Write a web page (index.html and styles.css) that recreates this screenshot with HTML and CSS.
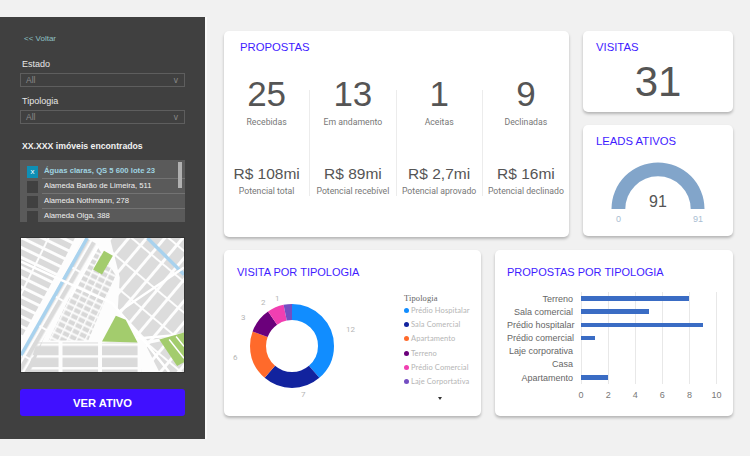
FILE: index.html
```html
<!DOCTYPE html>
<html lang="pt-BR">
  <head>
    <meta charset="UTF-8" />
    <title>Dashboard de propostas</title>
    <link rel="stylesheet" href="styles.css">
  </head>
  <body>
    <div class="page">
      <aside class="side">
        <a class="back">&lt;&lt; Voltar</a>
        <label class="field-label">Estado</label>
        <div class="select"><span>All</span><span>v</span></div>
        <label class="field-label second">Tipologia</label>
        <div class="select"><span>All</span><span>v</span></div>
        <h3 class="found">XX.XXX imóveis encontrados</h3>
        <div class="list">
          <div class="row active"><i class="check">x</i><span>Águas claras, QS 5 600 lote 23</span></div>
          <div class="row"><i class="check"></i><span>Alameda Barão de Limeira, 511</span></div>
          <div class="row"><i class="check"></i><span>Alameda Nothmann, 278</span></div>
          <div class="row"><i class="check"></i><span>Alameda Olga, 388</span></div>
          <div class="scroll"></div>
        </div>
        <svg class="map" viewBox="0 0 165 136" preserveAspectRatio="none">
          <defs>
            <pattern id="long" width="25" height="9" patternUnits="userSpaceOnUse" patternTransform="rotate(26)">
              <rect x="1" y="1" width="23" height="6" fill="#dadada" />
            </pattern>
            <pattern id="strip" width="34" height="7" patternUnits="userSpaceOnUse" patternTransform="rotate(-60)">
              <rect x="1" y="1" width="32" height="4.5" fill="#dadada" />
            </pattern>
            <pattern id="right" width="24" height="14" patternUnits="userSpaceOnUse" patternTransform="rotate(-50)">
              <rect x="1" y="1" width="22" height="11" fill="#dcdcdc" />
            </pattern>
            <pattern id="small" width="8" height="6.5" patternUnits="userSpaceOnUse" patternTransform="rotate(26)">
              <rect x="0.5" y="0.5" width="6.5" height="4.5" fill="#d8d8d8" />
            </pattern>
            <pattern id="flat" width="40" height="12" patternUnits="userSpaceOnUse">
              <rect x="2" y="1.5" width="36" height="9.5" fill="#dadada" />
            </pattern>
          </defs>
          <rect width="165" height="136" fill="#fdfdfd" />
          <polygon points="0,0 56,0 0,102" fill="url(#long)" />
          <polygon points="62,2 70,0 78,6 64,30 36,76 22,104 10,136 0,136 0,122" fill="url(#strip)" />
          <polygon points="78,10 96,38 84,66 68,104 28,104 52,54" fill="url(#small)" />
          <polygon points="90,0 165,0 165,98 128,104 98,72 100,40" fill="url(#right)" />
          <polygon points="16,106 118,106 122,136 6,136" fill="url(#flat)" />
          <polygon points="126,108 165,100 165,136 140,136" fill="url(#right)" />
          <path d="M0 119 L67 0" stroke="#a8d2ee" stroke-width="3.5" fill="none" />
          <path d="M128 0 L165 37" stroke="#a8d2ee" stroke-width="3.5" fill="none" />
          <path d="M0 24 L92 66 L126 106 L150 136" stroke="#fff" stroke-width="2.5" fill="none" />
          <path d="M82 105 L165 98 M165 30 L100 74 M78 8 L50 60" stroke="#fff" stroke-width="2.5" fill="none" />
          <polygon points="84,13 93,18 82,37 73,32" fill="#a3cc6d" />
          <polygon points="96,79 106,83 118,106 82,105" fill="#a3cc6d" />
          <polygon points="140,103 165,96 165,126 158,130" fill="#a3cc6d" />
          <path d="M150 103 L165 122 M157 100 L165 110" stroke="#fff" stroke-width="1.5" fill="none" />
        </svg>
        <button class="cta">VER ATIVO</button>
      </aside>

      <main class="main">
        <div class="top">
          <section class="card propostas">
            <h2 class="title">PROPOSTAS</h2>
            <div class="stats">
              <div class="stat">
                <div class="big">25</div><div class="lbl">Recebidas</div>
                <div class="mid">R$ 108mi</div><div class="lbl">Potencial total</div>
              </div>
              <div class="stat">
                <div class="big">13</div><div class="lbl">Em andamento</div>
                <div class="mid">R$ 89mi</div><div class="lbl">Potencial recebível</div>
              </div>
              <div class="stat">
                <div class="big">1</div><div class="lbl">Aceitas</div>
                <div class="mid">R$ 2,7mi</div><div class="lbl">Potencial aprovado</div>
              </div>
              <div class="stat">
                <div class="big">9</div><div class="lbl">Declinadas</div>
                <div class="mid">R$ 16mi</div><div class="lbl">Potencial declinado</div>
              </div>
            </div>
          </section>
          <div class="stack">
            <section class="card visitas">
              <h2 class="title">VISITAS</h2>
              <div class="visitas-num">31</div>
            </section>
            <section class="card leads">
              <h2 class="title">LEADS ATIVOS</h2>
              <div class="gauge">
                <svg width="94" height="47" viewBox="0 0 94 47">
                  <path d="M0.5 47 A46.5 46.5 0 0 1 93.5 47 L79.7 47 A32.7 32.7 0 0 0 14.3 47 Z" fill="#82a5ca" />
                </svg>
                <span class="gauge-val">91</span>
              </div>
              <div class="gauge-ends"><span>0</span><span>91</span></div>
            </section>
          </div>
        </div>

        <div class="bottom">
          <section class="card tipo">
            <h2 class="title large">VISITA POR TIPOLOGIA</h2>
            <div class="tipo-body">
              <div class="donut">
                <svg width="84" height="84" viewBox="0 0 84 84">
                  <g fill="none" stroke-width="16" transform="rotate(-90 42 42)">
                    <circle cx="42" cy="42" r="34" pathLength="31" stroke="#118dff" stroke-dasharray="12 19" stroke-dashoffset="0" />
                    <circle cx="42" cy="42" r="34" pathLength="31" stroke="#12239e" stroke-dasharray="7 24" stroke-dashoffset="-12" />
                    <circle cx="42" cy="42" r="34" pathLength="31" stroke="#ff6a2b" stroke-dasharray="6 25" stroke-dashoffset="-19" />
                    <circle cx="42" cy="42" r="34" pathLength="31" stroke="#6b007b" stroke-dasharray="3 28" stroke-dashoffset="-25" />
                    <circle cx="42" cy="42" r="34" pathLength="31" stroke="#f13fb1" stroke-dasharray="2 29" stroke-dashoffset="-28" />
                    <circle cx="42" cy="42" r="34" pathLength="31" stroke="#744ec2" stroke-dasharray="1 30" stroke-dashoffset="-30" />
                  </g>
                </svg>
                <span class="slice s12">12</span>
                <span class="slice s7">7</span>
                <span class="slice s6">6</span>
                <span class="slice s3">3</span>
                <span class="slice s2">2</span>
                <span class="slice s1">1</span>
              </div>
              <div class="legend">
                <div class="legend-title">Tipologia</div>
                <div class="legend-item"><i class="dot c1"></i>Prédio Hospitalar</div>
                <div class="legend-item"><i class="dot c2"></i>Sala Comercial</div>
                <div class="legend-item"><i class="dot c3"></i>Apartamento</div>
                <div class="legend-item"><i class="dot c4"></i>Terreno</div>
                <div class="legend-item"><i class="dot c5"></i>Prédio Comercial</div>
                <div class="legend-item"><i class="dot c6"></i>Laje Corportativa</div>
                <div class="legend-more"></div>
              </div>
            </div>
          </section>
          <section class="card barras">
            <h2 class="title large">PROPOSTAS POR TIPOLOGIA</h2>
            <div class="chart">
              <div class="bar-row"><span class="bar-name">Terreno</span><div class="track"><div class="bar" style="width:80%"></div></div></div>
              <div class="bar-row"><span class="bar-name">Sala comercial</span><div class="track"><div class="bar" style="width:50%"></div></div></div>
              <div class="bar-row"><span class="bar-name">Prédio hospitalar</span><div class="track"><div class="bar" style="width:90%"></div></div></div>
              <div class="bar-row"><span class="bar-name">Prédio comercial</span><div class="track"><div class="bar" style="width:10%"></div></div></div>
              <div class="bar-row"><span class="bar-name">Laje corporativa</span><div class="track"></div></div>
              <div class="bar-row"><span class="bar-name">Casa</span><div class="track"></div></div>
              <div class="bar-row"><span class="bar-name">Apartamento</span><div class="track"><div class="bar" style="width:20%"></div></div></div>
              <div class="axis"><span>0</span><span>2</span><span>4</span><span>6</span><span>8</span><span>10</span></div>
            </div>
          </section>
        </div>
      </main>
    </div>
  </body>
</html>
```

FILE: styles.css
```css
* {
  margin: 0;
  padding: 0;
  box-sizing: border-box;
}
body {
  background-color: #f1f1f1;
  font-family: "Liberation Sans", Arial, sans-serif;
  color: #555;
}
.page {
  display: flex;
  align-items: flex-start;
  padding-top: 17px;
}

/* lateral */
.side {
  width: 205px;
  height: 422px;
  flex-shrink: 0;
  background-color: #404040;
  box-shadow: 2px 0 0 #fafafa;
  padding: 17px 20px 0;
  display: flex;
  flex-direction: column;
}
.back {
  font-size: 8px;
  line-height: 10px;
  color: #8fc1c4;
  margin-left: 4px;
}
.field-label {
  font-size: 9px;
  line-height: 12px;
  color: #e6e6e6;
  margin: 14px 0 0 2px;
}
.field-label.second {
  margin-top: 8px;
}
.select {
  height: 14px;
  margin-top: 3px;
  border: 1px solid #5e5e5e;
  padding: 0 6px 0 5px;
  display: flex;
  justify-content: space-between;
  align-items: center;
  font-size: 8.5px;
  color: #8a8a8a;
}
.found {
  font-size: 8.7px;
  line-height: 12px;
  font-weight: bold;
  color: #f2f2f2;
  margin: 16px 0 0 2px;
}
.list {
  height: 62px;
  margin-top: 8px;
  padding-top: 4px;
  background-color: #5a5a5a;
  overflow: hidden;
  position: relative;
}
.row {
  height: 15px;
  display: flex;
  align-items: center;
  gap: 4px;
  padding-left: 7px;
  font-size: 7.7px;
  color: #f0f0f0;
}
.row span {
  flex: 1;
  height: 15px;
  line-height: 14px;
  padding-left: 2px;
  border-bottom: 1px solid #737373;
}
.check {
  width: 11px;
  height: 12px;
  flex-shrink: 0;
  background-color: #404040;
  font-style: normal;
  font-size: 8px;
  line-height: 11px;
  text-align: center;
  color: #fff;
}
.row.active span {
  color: #9fd3e0;
  font-weight: bold;
}
.row.active .check {
  background-color: #0e8fb5;
}
.scroll {
  position: absolute;
  top: 2px;
  right: 3px;
  width: 4px;
  height: 26px;
  background-color: #b0b0b0;
}
.map {
  display: block;
  width: 165px;
  height: 136px;
  margin-top: 15px;
  border: 1px solid #333;
}
.cta {
  height: 27px;
  margin-top: 16px;
  border: 0;
  border-radius: 3px;
  background-color: #4010ff;
  color: #fff;
  font-family: "Liberation Sans", Arial, sans-serif;
  font-size: 11.2px;
  font-weight: bold;
}

/* conteudo */
.main {
  width: 509px;
  margin-left: 19px;
  padding-top: 14px;
  display: flex;
  flex-direction: column;
  gap: 13px;
}
.top,
.bottom {
  display: flex;
  gap: 14px;
}
.card {
  background-color: #fff;
  border-radius: 5px;
  box-shadow: 0 2px 3px rgba(0, 0, 0, 0.25);
}
.title {
  font-size: 11.3px;
  line-height: 14px;
  font-weight: normal;
  color: #3f1cff;
}
.title.large {
  font-size: 11px;
}

.propostas {
  width: 345px;
  height: 206px;
  padding: 9px 0 0 16px;
}
.stats {
  display: flex;
  margin: 36px 0 0 -16px;
}
.stat {
  width: 86.5px;
  height: 106px;
  text-align: center;
  border-right: 1px solid #ececec;
}
.stat:last-child {
  border-right: 0;
}
.big {
  font-size: 35px;
  line-height: 40px;
  margin-top: -16px;
}
.lbl {
  font-family: Roboto, "Liberation Sans", sans-serif;
  font-size: 8.7px;
  line-height: 12px;
  margin-top: 2px;
  color: #777;
  white-space: nowrap;
}
.mid {
  font-size: 15.5px;
  line-height: 20px;
  margin-top: 36px;
}
.mid + .lbl {
  margin-top: 1px;
}

.stack {
  display: flex;
  flex-direction: column;
  gap: 13px;
}
.visitas {
  width: 150px;
  height: 81px;
  padding: 9px 13px 0;
}
.visitas-num {
  font-size: 42px;
  line-height: 44px;
  text-align: center;
  margin-top: 6px;
}
.leads {
  width: 150px;
  height: 111px;
  padding: 9px 13px 0;
}
.gauge {
  width: 94px;
  height: 47px;
  margin: 14px auto 0 15px;
  position: relative;
}
.gauge svg {
  display: block;
}
.gauge-val {
  position: absolute;
  left: 0;
  right: 0;
  bottom: -2px;
  text-align: center;
  font-size: 16px;
  color: #555;
}
.gauge-ends {
  display: flex;
  justify-content: space-between;
  margin: 5px 0 0 20px;
  padding-right: 17px;
  font-size: 9px;
  color: #a9bdd2;
}

.tipo {
  width: 257px;
  height: 166px;
  padding: 15px 0 0 13px;
}
.tipo-body {
  display: flex;
  margin-top: 16px;
}
.donut {
  width: 84px;
  height: 84px;
  margin: 9px 0 0 13px;
  position: relative;
  flex-shrink: 0;
}
.donut svg {
  display: block;
}
.slice {
  position: absolute;
  font-family: Roboto, sans-serif;
  font-size: 8px;
  color: #b5b5b5;
}
.s12 { left: 96px; top: 21px; }
.s7 { left: 51px; top: 86px; }
.s6 { left: -17px; top: 49px; }
.s3 { left: -9px; top: 9px; }
.s2 { left: 11px; top: -6px; }
.s1 { left: 25px; top: -10px; }
.legend {
  margin-left: 70px;
  margin-top: -2px;
  font-family: Lato, sans-serif;
  font-size: 7.5px;
  letter-spacing: 0.1px;
  color: #b5b5b5;
}
.legend-title {
  font-family: "Liberation Serif", serif;
  font-size: 8.5px;
  line-height: 11px;
  color: #666;
  margin-bottom: -1px;
}
.legend-item {
  display: flex;
  align-items: center;
  gap: 2px;
  height: 14.3px;
  white-space: nowrap;
}
.dot {
  width: 5px;
  height: 5px;
  border-radius: 50%;
}
.c1 { background-color: #118dff; }
.c2 { background-color: #12239e; }
.c3 { background-color: #ff6a2b; }
.c4 { background-color: #6b007b; }
.c5 { background-color: #f13fb1; }
.c6 { background-color: #744ec2; }
.legend-more {
  width: 0;
  height: 0;
  margin: 8px 0 0 34px;
  border-left: 2.5px solid transparent;
  border-right: 2.5px solid transparent;
  border-top: 3px solid #333;
}

.barras {
  width: 238px;
  height: 166px;
  padding: 15px 0 0 12px;
}
.chart {
  margin-top: 13px;
}
.bar-row {
  display: flex;
  align-items: center;
  height: 13.17px;
}
.bar-name {
  width: 66px;
  flex-shrink: 0;
  text-align: right;
  font-size: 9px;
  white-space: nowrap;
  color: #666;
}
.track {
  width: 135.5px;
  height: 13.17px;
  margin-left: 8px;
  display: flex;
  align-items: center;
  background: repeating-linear-gradient(90deg, #e8e8e8 0, #e8e8e8 1px, transparent 1px, transparent 27.1px);
}
.bar {
  height: 4.5px;
  background-color: #3a6cc4;
}
.axis {
  display: flex;
  margin: 6px 0 0 60.5px;
  font-size: 9px;
  color: #777;
}
.axis span {
  width: 27.1px;
  text-align: center;
}
```
